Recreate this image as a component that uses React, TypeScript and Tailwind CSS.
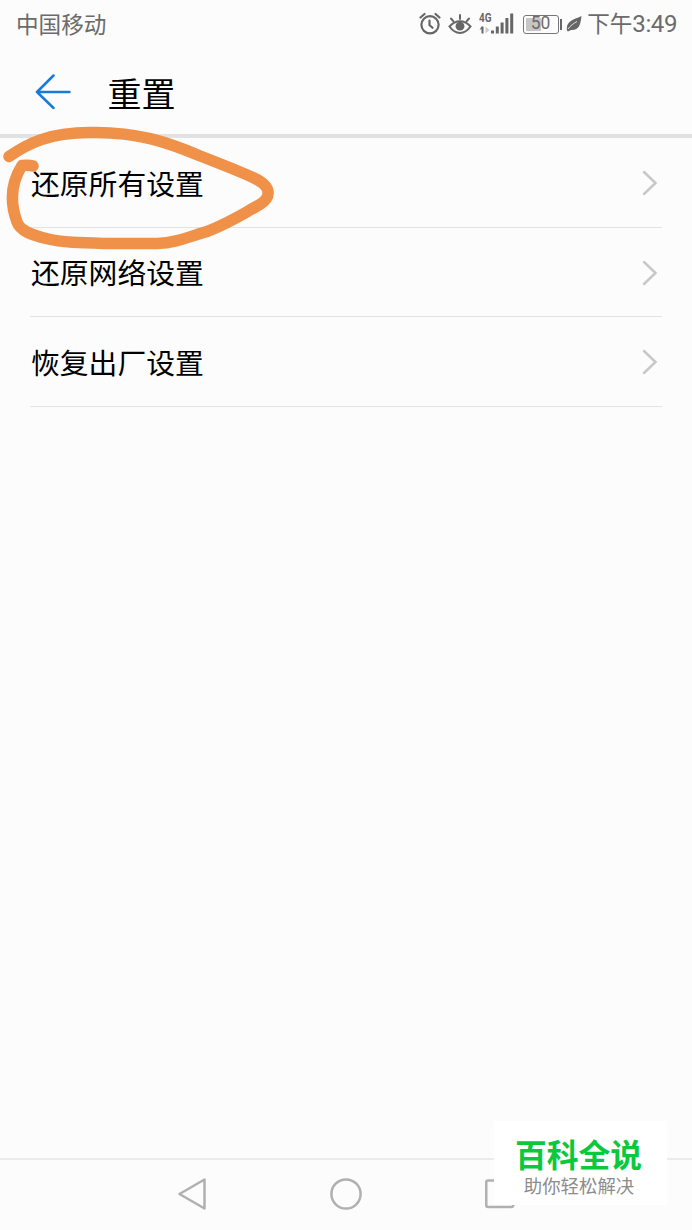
const items = ['还原所有设置', '还原网络设置', '恢复出厂设置'];

const AlarmIcon = () => (
  <svg width="22" height="24" viewBox="0 0 22 24" fill="none" stroke="#666" strokeWidth="2.2" strokeLinecap="round">
    <circle cx="11" cy="12.8" r="8.6" />
    <path d="M10.5 8.500v4.500l3 2.800M1.500 5.500l4-3.500M20.500 5.500l-4-3.500" />
  </svg>
);

const EyeIcon = () => (
  <svg width="24" height="24" viewBox="0 0 24 24" fill="none" stroke="#666" strokeWidth="2" strokeLinecap="round">
    <path d="M1.5 14.5C7.5 7.5 16.5 7.5 22.5 14.5C16.5 23 7.500 23 1.5 14.5Z" />
    <circle cx="12" cy="14.2" r="4.4" fill="#666" stroke="none" />
    <path d="M12 3v4M3 6.5l2.500 2.800M21 6.5l-2.500 2.800" />
  </svg>
);

const SignalIcon = () => (
  <svg width="36" height="24" viewBox="0 0 36 24" fill="#666">
    <text x="0" y="10" fontSize="13" fontWeight="700" fontFamily="Roboto, sans-serif" textLength="12.500" lengthAdjust="spacingAndGlyphs">4G</text>
    <path d="M2.5 14.500h2v7h-2v-4.500l-2 1z" />
    <path d="M6.500 14.500v7l4-3.500z" fill="#ccc" />
    <path d="M12 18.500h3v3h-3zM16.800 14.500h3v7h-3zM21.600 10.500h3v11h-3zM26.400 6h3v15.500h-3zM31.200 1.500h3v20h-3z" />
  </svg>
);

const LeafIcon = () => (
  <svg width="16" height="18" viewBox="0 0 16 18">
    <path d="M15.500 1C14.500 10 13 15.500 5 15L2 16.500L1 15.500C-.5 6 8 4.500 15.500 1Z" fill="#666" />
    <path d="M2 14C4.500 10.500 7.500 8.500 11 6.500" stroke="#fcfcfc" strokeWidth="0.800" fill="none" />
  </svg>
);

const Chevron = () => (
  <svg width="16" height="26" viewBox="0 0 16 26" fill="none" stroke="#c8c8c8" strokeWidth="2.500" strokeLinecap="round">
    <path d="M2 2l11.500 11L2 24" />
  </svg>
);

const StatusBar = () => (
  <div className="h-12 flex items-center justify-between pl-4 pr-[15px] text-[#6b6b6b] text-[22.6px] leading-none">
    <span>中国移动</span>
    <div className="flex items-center">
      <AlarmIcon />
      <div className="ml-[7px]"><EyeIcon /></div>
      <div className="ml-[7px]"><SignalIcon /></div>
      <div className="ml-2 flex items-center">
        <div className="w-[36px] h-[19px] rounded-[3px] border border-[#777] p-[2px]">
          <div className="h-full flex items-center justify-center bg-linear-to-r from-[#c6c6c6] from-50% to-transparent to-50% font-[Roboto] text-[17.5px] leading-none">
            50
          </div>
        </div>
        <div className="ml-px w-[2.5px] h-[11px] bg-[#666]" />
      </div>
      <div className="ml-1"><LeafIcon /></div>
      <span className="ml-[5px] whitespace-nowrap">
        下午<span className="font-[Roboto] text-[24px] tracking-[-0.4px]">3:49</span>
      </span>
    </div>
  </div>
);

const Header = () => (
  <div className="h-[90px] flex items-center pl-[35px] border-b-4 border-[#e2e2e2]">
    <svg className="mt-[2px]" width="37" height="36" viewBox="0 0 37 36" fill="none" stroke="#187bdc" strokeWidth="2.500" strokeLinecap="round" strokeLinejoin="round">
      <path d="M18.500 1.500L2 18L18.500 34M2 18H34.500" />
    </svg>
    <h1 className="ml-[35.5px] mt-1 text-[34px] leading-none font-normal text-black">重置</h1>
  </div>
);

const ScribbleCircle = () => (
  <svg className="absolute left-0 top-0" width="290" height="260" fill="none" stroke="#f0914a" strokeWidth="11.500" strokeLinecap="round" strokeLinejoin="round">
    <path d="M9 156.500C27 144 48 132.500 90 132.500C138 131.500 169 143 199 155.500C221 164 239 171 254 178C273 187 271 198 259 205C239 216 222 227 202 233C186 238 174 243 157 243.500H110C85 243 64 243 46 238.500C32 235 20 231 17 222C10 203 11 183 22 165.500C26 165 30 165 33 166" />
  </svg>
);

const Watermark = () => (
  <div className="absolute left-[494px] top-[1121px] w-[173px] h-[84px] pt-[15px] bg-white flex flex-col items-center whitespace-nowrap">
    <span className="text-[31.8px] leading-[34px] font-bold text-[#0bc83c] -ml-1">百科全说</span>
    <span className="mt-[5px] text-[18.4px] leading-5 text-[#8c8c8c] -ml-[3px]">助你轻松解决</span>
  </div>
);

const NavBar = () => (
  <div className="h-[72px] flex justify-between items-center pb-[2px] px-[177px] border-t-2 border-[#ebebeb]">
    <svg width="30" height="34" viewBox="0 0 30 34" fill="none" stroke="#b0b0b0" strokeWidth="2.500" strokeLinejoin="round">
      <path d="M2.500 17L27.500 2.500V31.500Z" />
    </svg>
    <svg width="32" height="32" viewBox="0 0 32 32" fill="none" stroke="#b0b0b0" strokeWidth="2.500">
      <circle cx="16" cy="16" r="14.600" />
    </svg>
    <svg width="30" height="30" viewBox="0 0 30 30" fill="none" stroke="#b0b0b0" strokeWidth="2.500">
      <rect x="1.250" y="1.500" width="27" height="26.500" rx="2" />
    </svg>
  </div>
);

export default function App() {
  return (
    <div className="relative w-[692px] h-[1230px] overflow-hidden flex flex-col bg-[#fcfcfc] font-['Noto_Sans_CJK_SC',sans-serif]">
      <StatusBar />
      <Header />
      <ul className="flex-1 px-[30px]">
        {items.map((item) => (
          <li key={item} className="h-[89.6px] flex items-center justify-between pt-[2px] pl-px pr-1 border-b-[1.5px] border-[#e3e3e3]">
            <span className="text-[28.8px] leading-none text-black">{item}</span>
            <Chevron />
          </li>
        ))}
      </ul>
      <NavBar />
      <ScribbleCircle />
      <Watermark />
    </div>
  );
}
